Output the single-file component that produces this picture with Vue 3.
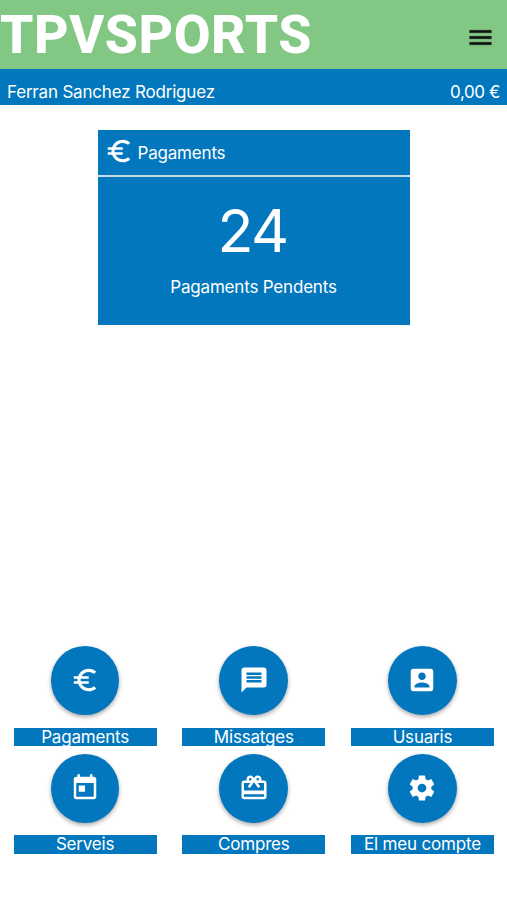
<template>
  <div class="home">
    <header class="toolbar">
      <div class="logo">TPVSPORTS</div>
      <button class="menu-button" aria-label="Menu">
        <svg viewBox="0 0 24 24"><path d="M3 18h18v-2H3v2zm0-5h18v-2H3v2zm0-7v2h18V6H3z" /></svg>
      </button>
    </header>

    <div class="user-bar">
      <span class="user-name">Ferran Sanchez Rodriguez</span>
      <span class="balance">0,00 €</span>
    </div>

    <main class="content">
      <section class="card">
        <div class="card-header">
          <svg viewBox="0 0 24 24"><path :d="icons.euro" /></svg>
          <span>Pagaments</span>
        </div>
        <div class="card-body">
          <div class="count">24</div>
          <div class="caption">Pagaments Pendents</div>
        </div>
      </section>
    </main>

    <nav class="actions">
      <div v-for="action in actions" :key="action.label" class="action">
        <button class="fab" :aria-label="action.label">
          <svg viewBox="0 0 24 24"><path :d="icons[action.icon]" /></svg>
        </button>
        <div class="label">{{ action.label }}</div>
      </div>
    </nav>
  </div>
</template>

<script setup>
const icons = {
  euro: 'M15 18.5c-2.51 0-4.68-1.42-5.76-3.5H15v-2H8.58c-.05-.33-.08-.66-.08-1s.03-.67.08-1H15V9H9.24C10.32 6.92 12.5 5.5 15 5.5c1.61 0 3.09.59 4.23 1.57L21 5.3C19.41 3.87 17.3 3 15 3c-3.92 0-7.24 2.51-8.48 6H3v2h3.06c-.04.33-.06.66-.06 1s.02.67.06 1H3v2h3.52c1.24 3.49 4.56 6 8.48 6 2.31 0 4.41-.87 6-2.3l-1.78-1.77c-1.13.98-2.6 1.57-4.22 1.57z',
  message: 'M20 2H4c-1.1 0-1.99.9-1.99 2L2 22l4-4h14c1.1 0 2-.9 2-2V4c0-1.1-.9-2-2-2zm-2 12H6v-2h12v2zm0-3H6V9h12v2zm0-3H6V6h12v2z',
  account: 'M3 5v14c0 1.1.89 2 2 2h14c1.1 0 2-.9 2-2V5c0-1.1-.9-2-2-2H5c-1.11 0-2 .9-2 2zm12 4c0 1.66-1.34 3-3 3s-3-1.34-3-3 1.34-3 3-3 3 1.34 3 3zm-9 8c0-2 4-3.1 6-3.1s6 1.1 6 3.1v1H6v-1z',
  today: 'M19 3h-1V1h-2v2H8V1H6v2H5c-1.11 0-1.99.9-1.99 2L3 19c0 1.1.89 2 2 2h14c1.1 0 2-.9 2-2V5c0-1.1-.9-2-2-2zm0 16H5V8h14v11zM7 10h5v5H7z',
  gift: 'M20 6h-2.18c.11-.31.18-.65.18-1 0-1.66-1.34-3-3-3-1.05 0-1.96.54-2.5 1.35l-.5.67-.5-.68C10.96 2.54 10.05 2 9 2 7.34 2 6 3.34 6 5c0 .35.07.69.18 1H4c-1.11 0-1.99.89-1.99 2L2 19c0 1.11.89 2 2 2h16c1.11 0 2-.89 2-2V8c0-1.11-.89-2-2-2zm-5-2c.55 0 1 .45 1 1s-.45 1-1 1-1-.45-1-1 .45-1 1-1zM9 4c.55 0 1 .45 1 1s-.45 1-1 1-1-.45-1-1 .45-1 1-1zm11 15H4v-2h16v2zm0-5H4V8h5.08L7 10.83 8.62 12 11 8.76l1-1.36 1 1.36L15.38 12 17 10.83 14.92 8H20v6z',
  settings: 'M19.43 12.98c.04-.32.07-.64.07-.98s-.03-.66-.07-.98l2.11-1.65c.19-.15.24-.42.12-.64l-2-3.46c-.12-.22-.39-.3-.61-.22l-2.49 1c-.52-.4-1.08-.73-1.69-.98l-.38-2.65C14.46 2.18 14.25 2 14 2h-4c-.25 0-.46.18-.49.42l-.38 2.65c-.61.25-1.17.59-1.69.98l-2.49-1c-.23-.09-.49 0-.61.22l-2 3.46c-.13.22-.07.49.12.64l2.11 1.65c-.04.32-.07.65-.07.98s.03.66.07.98l-2.11 1.65c-.19.15-.24.42-.12.64l2 3.46c.12.22.39.3.61.22l2.49-1c.52.4 1.08.73 1.69.98l.38 2.65c.03.24.24.42.49.42h4c.25 0 .46-.18.49-.42l.38-2.65c.61-.25 1.17-.59 1.69-.98l2.49 1c.23.09.49 0 .61-.22l2-3.46c.12-.22.07-.49-.12-.64l-2.11-1.65zM12 15.5c-1.93 0-3.5-1.57-3.5-3.5s1.57-3.5 3.5-3.5 3.5 1.57 3.5 3.5-1.57 3.5-3.5 3.5z'
}

const actions = [
  { label: 'Pagaments', icon: 'euro' },
  { label: 'Missatges', icon: 'message' },
  { label: 'Usuaris', icon: 'account' },
  { label: 'Serveis', icon: 'today' },
  { label: 'Compres', icon: 'gift' },
  { label: 'El meu compte', icon: 'settings' }
]
</script>

<style>
body {
  margin: 0;
  background: #fff;
}
</style>

<style scoped>
.home {
  display: flex;
  flex-direction: column;
  height: 900px;
  box-sizing: border-box;
  padding-bottom: 46.4px;
  overflow: hidden;
  font-family: Inter, "Liberation Sans", sans-serif;
  font-size: 17px;
  letter-spacing: -0.19px;
  color: #fff;
}

button {
  border: 0;
  padding: 0;
  background: none;
}

svg {
  display: block;
  fill: currentColor;
}

.toolbar {
  display: flex;
  align-items: center;
  justify-content: space-between;
  height: 69px;
  padding-right: 12px;
  background: #82c884;
}

.logo {
  font-family: Roboto, sans-serif;
  font-size: 53.5px;
  font-weight: 800;
  line-height: 69px;
  letter-spacing: 0.5px;
}

.menu-button {
  margin-top: 6px;
  color: #111;
}

.menu-button svg {
  width: 29px;
  height: 29px;
  stroke: currentColor;
  stroke-width: 0.3;
}

.user-bar {
  display: flex;
  justify-content: space-between;
  height: 36px;
  box-sizing: border-box;
  padding: 9px 7px 0;
  line-height: 28px;
  background: #0277bd;
}

.balance {
  letter-spacing: -0.4px;
}

.content {
  flex: 1;
  padding: 25px 97.5px 0;
}

.card {
  width: 312px;
  background: #c9dde0;
}

.card-header {
  display: flex;
  align-items: center;
  height: 45px;
  box-sizing: border-box;
  padding: 0 6px;
  background: #0277bd;
}

.card-header svg {
  width: 30px;
  height: 30px;
  margin: 0 4px 3px 0;
}

.card-body {
  height: 147.5px;
  margin-top: 2px;
  text-align: center;
  background: #0277bd;
}

.count {
  padding: 18px 2px 0 0;
  font-size: 59px;
  line-height: 72px;
  letter-spacing: -1.5px;
}

.caption {
  line-height: 40px;
}

.actions {
  display: grid;
  grid-template-columns: repeat(3, 143px);
  gap: 7.5px 25.7px;
  padding-left: 13.6px;
}

.action {
  display: flex;
  flex-direction: column;
  align-items: center;
}

.fab {
  display: flex;
  align-items: center;
  justify-content: center;
  width: 68.6px;
  height: 69px;
  border-radius: 50%;
  color: #fff;
  background: #0277bd;
  box-shadow: 0 2px 4px rgba(0, 0, 0, 0.35);
}

.fab svg {
  width: 30px;
  height: 30px;
  margin-bottom: 1px;
}

.label {
  width: 100%;
  height: 18.5px;
  margin-top: 12.5px;
  line-height: 18px;
  text-align: center;
  background: #0277bd;
}
</style>
